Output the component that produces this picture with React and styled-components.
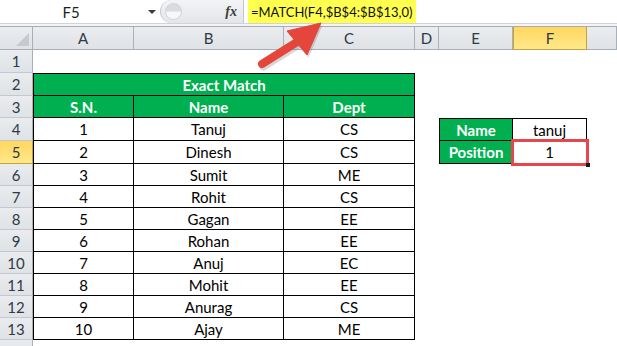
import React from 'react';
import styled, { createGlobalStyle, css } from 'styled-components';

const GlobalStyle = createGlobalStyle`
  html, body {
    margin: 0;
    padding: 0;
    background: #ffffff;
    overflow: hidden;
  }
  body {
    font-family: Lato, "Open Sans", sans-serif;
  }
`;

const Sheet = styled.div`
  position: relative;
  width: 617px;
  height: 346px;
  overflow: hidden;
  background: #ffffff;
`;

const FormulaBar = styled.div`
  display: flex;
  align-items: stretch;
  height: 23px;
  border-bottom: 1px solid #d0d3d8;
  background: #ffffff;
`;

const NameBox = styled.div`
  width: 142px;
  display: flex;
  align-items: center;
  justify-content: center;
  font-size: 15px;
  color: #1f1f1f;
`;

const DropArrow = styled.div`
  width: 18px;
  display: flex;
  align-items: center;
  justify-content: flex-start;
  &::after {
    content: '';
    border-left: 4px solid transparent;
    border-right: 4px solid transparent;
    border-top: 4px solid #3a3a3a;
    margin-left: 6px;
  }
`;

const ButtonPill = styled.div`
  width: 84px;
  display: flex;
  align-items: center;
  justify-content: space-between;
  padding: 0 6px 0 4px;
  box-sizing: border-box;
  background: linear-gradient(#f3f4f6, #e3e5e8);
  border-left: 1px solid #c4c7cc;
  border-radius: 12px 0 0 12px;
  border-right: 1px solid #c4c7cc;
`;

const Knob = styled.div`
  width: 15px;
  height: 15px;
  border-radius: 50%;
  background: linear-gradient(#d9dbdf 45%, #f6f7f8 55%);
  border: 1px solid #d0d3d7;
`;

const Fx = styled.span`
  font-family: "Liberation Serif", serif;
  font-style: italic;
  font-weight: bold;
  font-size: 14px;
  color: #3d3d3d;
`;

const FormulaInput = styled.div`
  flex: 1;
  display: flex;
  align-items: stretch;
  padding-left: 4px;
`;

const Highlight = styled.div`
  background: #ffff4f;
  display: flex;
  align-items: center;
  padding: 0 4px 0 3px;
  font-size: 13px;
  color: #111111;
  white-space: nowrap;
`;

const BarGap = styled.div`
  height: 2px;
  background: #f4f5f7;
  border-bottom: 1px solid #a7acb3;
`;

const Grid = styled.div`
  display: grid;
  grid-template-columns: 33px 101px 150px 131px 24px 74px 74px 1fr;
  grid-template-rows: 23px 23px 23px 22px 23px 23px repeat(9, 22px);
`;

const headBase = css`
  box-sizing: border-box;
  display: flex;
  align-items: center;
  justify-content: center;
  font-size: 15px;
  color: #2e3a46;
  background: linear-gradient(#eaecef, #dfe2e6);
`;

const Corner = styled.div`
  ${headBase};
  position: relative;
  border-right: 1px solid #a9afb7;
  border-bottom: 1px solid #a9afb7;
  &::after {
    content: '';
    position: absolute;
    right: 3px;
    bottom: 3px;
    border-left: 13px solid transparent;
    border-bottom: 13px solid #c6cacf;
  }
`;

const ColHead = styled.div`
  ${headBase};
  border-right: 1px solid #aab0b8;
  border-bottom: 1px solid #a9afb7;
  ${(p) =>
    p.$active &&
    css`
      background: linear-gradient(#ffd75e, #ffe88a);
      border-right: 1px solid #c7a13c;
      border-left: 1px solid #c7a13c;
      border-bottom: 1px solid #c7a13c;
    `}
`;

const RowHead = styled.div`
  ${headBase};
  border-right: 1px solid #a9afb7;
  border-bottom: 1px solid #c3c8ce;
  ${(p) =>
    p.$active &&
    css`
      background: linear-gradient(#ffd75e, #ffe88a);
      border-bottom: 1px solid #c7a13c;
      border-right: 1px solid #c7a13c;
    `}
`;

const Cell = styled.div`
  box-sizing: border-box;
  display: flex;
  align-items: center;
  justify-content: center;
  font-size: 15px;
  color: #000000;
  white-space: nowrap;
  ${(p) => p.$span && `grid-column: span ${p.$span};`}
  ${(p) =>
    p.$boxed &&
    css`
      border-right: 1px solid #000;
      border-bottom: 1px solid #000;
    `}
  ${(p) => p.$left && 'border-left: 1px solid #000;'}
  ${(p) => p.$top && 'border-top: 1px solid #000;'}
  ${(p) =>
    p.$green &&
    css`
      background: #00b050;
      color: #ffffff;
      font-weight: bold;
    `}
`;

const Selected = styled(Cell)`
  position: relative;
  &::before {
    content: '';
    position: absolute;
    left: -2px;
    top: -2px;
    right: -3px;
    bottom: -3px;
    border: 3px solid #e5474b;
    pointer-events: none;
  }
  &::after {
    content: '';
    position: absolute;
    right: -4px;
    bottom: -4px;
    width: 4px;
    height: 4px;
    background: #1a1a1a;
  }
`;

const Arrow = styled.svg`
  position: absolute;
  left: 0;
  top: 0;
  pointer-events: none;
`;

const cols = ['A', 'B', 'C', 'D', 'E', 'F', 'G'];

const people = [
  ['1', 'Tanuj', 'CS'],
  ['2', 'Dinesh', 'CS'],
  ['3', 'Sumit', 'ME'],
  ['4', 'Rohit', 'CS'],
  ['5', 'Gagan', 'EE'],
  ['6', 'Rohan', 'EE'],
  ['7', 'Anuj', 'EC'],
  ['8', 'Mohit', 'EE'],
  ['9', 'Anurag', 'CS'],
  ['10', 'Ajay', 'ME'],
];

function renderRow(r) {
  const cells = [];
  if (r === 2) {
    cells.push(
      <Cell key="m" $span={3} $boxed $left $top $green>
        Exact Match
      </Cell>
    );
    for (let i = 0; i < 4; i++) cells.push(<Cell key={'e' + i} />);
    return cells;
  }
  if (r === 3) {
    ['S.N.', 'Name', 'Dept'].forEach((t, i) =>
      cells.push(
        <Cell key={t} $boxed $left={i === 0} $green>
          {t}
        </Cell>
      )
    );
  } else if (r >= 4 && r <= 13) {
    people[r - 4].forEach((t, i) =>
      cells.push(
        <Cell key={i} $boxed $left={i === 0}>
          {t}
        </Cell>
      )
    );
  } else {
    for (let i = 0; i < 3; i++) cells.push(<Cell key={'x' + i} />);
  }
  cells.push(<Cell key="d" />);
  if (r === 4) {
    cells.push(
      <Cell key="e" $boxed $left $top $green>
        Name
      </Cell>
    );
    cells.push(
      <Cell key="f" $boxed $top>
        tanuj
      </Cell>
    );
  } else if (r === 5) {
    cells.push(
      <Cell key="e" $boxed $left $green>
        Position
      </Cell>
    );
    cells.push(
      <Selected key="f" $boxed>
        1
      </Selected>
    );
  } else {
    cells.push(<Cell key="e" />);
    cells.push(<Cell key="f" />);
  }
  cells.push(<Cell key="g" />);
  return cells;
}

export default function App() {
  const rows = Array.from({ length: 14 }, (_, i) => i + 1);
  return (
    <Sheet>
      <GlobalStyle />
      <FormulaBar>
        <NameBox>F5</NameBox>
        <DropArrow />
        <ButtonPill>
          <Knob />
          <Fx>fx</Fx>
        </ButtonPill>
        <FormulaInput>
          <Highlight>=MATCH(F4,$B$4:$B$13,0)</Highlight>
        </FormulaInput>
      </FormulaBar>
      <BarGap />
      <Grid>
        <Corner />
        {cols.map((c) => (
          <ColHead key={c} $active={c === 'F'}>
            {c === 'G' ? '' : c}
          </ColHead>
        ))}
        {rows.map((r) => (
          <React.Fragment key={r}>
            <RowHead $active={r === 5}>{r}</RowHead>
            {renderRow(r)}
          </React.Fragment>
        ))}
      </Grid>
      <Arrow width="617" height="346" viewBox="0 0 617 346">
        <g opacity="0.25" transform="translate(1.5 2.5)">
          <line x1="262" y1="64" x2="297" y2="42" stroke="#666" strokeWidth="8" strokeLinecap="round" />
          <polygon points="321,23 287,31 307,55" fill="#666" />
        </g>
        <line x1="262" y1="64" x2="297" y2="42" stroke="#e5463b" strokeWidth="8" strokeLinecap="round" />
        <polygon points="321,23 287,31 307,55" fill="#e5463b" strokeLinejoin="round" stroke="#e5463b" strokeWidth="1" />
      </Arrow>
    </Sheet>
  );
}
